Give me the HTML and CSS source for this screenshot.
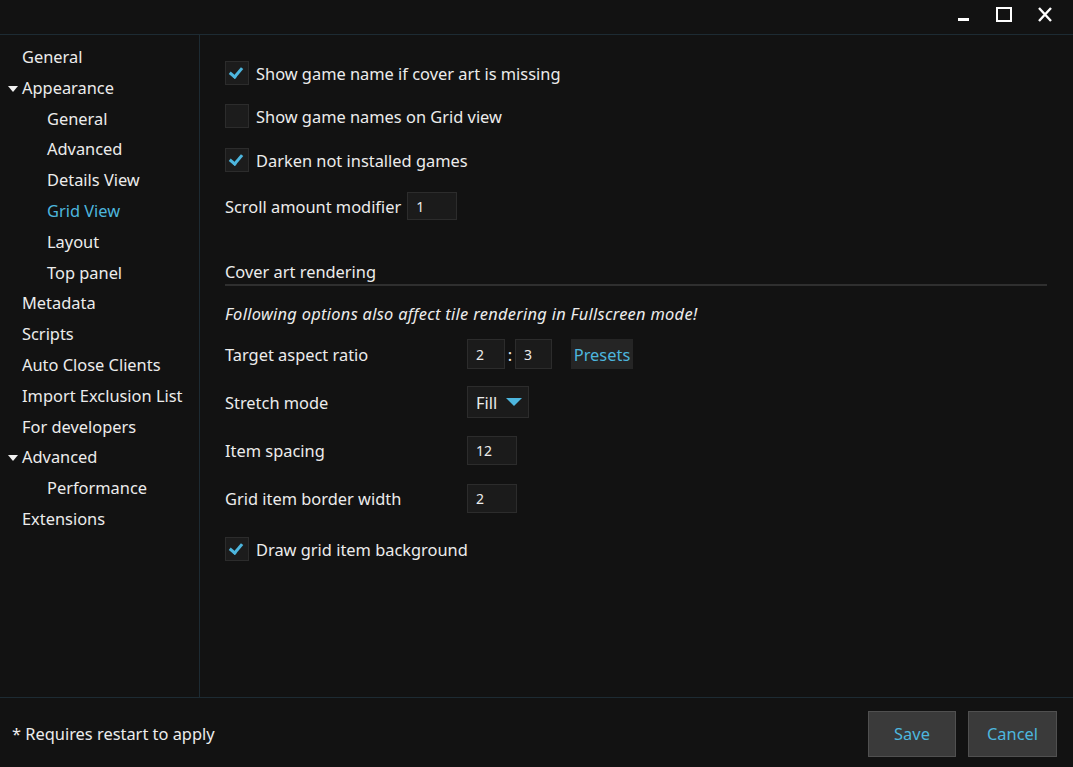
FILE: index.html
```html
<!DOCTYPE html>
<html>
<head>
<meta charset="utf-8">
<link rel="stylesheet" href="styles.css">
</head>
<body>
<div class="window">
  <div class="titlebar">
    <div class="win-btn">
      <svg width="14" height="14" viewBox="0 0 14 14"><rect x="1" y="10" width="11" height="3" fill="#fff"/></svg>
    </div>
    <div class="win-btn">
      <svg width="16" height="16" viewBox="0 0 16 16"><rect x="1" y="1" width="14" height="13" fill="none" stroke="#fff" stroke-width="2"/></svg>
    </div>
    <div class="win-btn">
      <svg width="16" height="16" viewBox="0 0 16 16"><path d="M2 1 L14 14 M14 1 L2 14" stroke="#fff" stroke-width="2.4" fill="none"/></svg>
    </div>
  </div>
  <div class="main">
    <nav class="sidebar">
      <div class="item l1">General</div>
      <div class="item l1"><span class="tri"></span>Appearance</div>
      <div class="item l2">General</div>
      <div class="item l2">Advanced</div>
      <div class="item l2">Details View</div>
      <div class="item l2 active">Grid View</div>
      <div class="item l2">Layout</div>
      <div class="item l2">Top panel</div>
      <div class="item l1">Metadata</div>
      <div class="item l1">Scripts</div>
      <div class="item l1">Auto Close Clients</div>
      <div class="item l1">Import Exclusion List</div>
      <div class="item l1">For developers</div>
      <div class="item l1"><span class="tri"></span>Advanced</div>
      <div class="item l2">Performance</div>
      <div class="item l1">Extensions</div>
    </nav>
    <section class="content">
      <label class="check r1"><span class="box on"></span>Show game name if cover art is missing</label>
      <label class="check r2"><span class="box"></span>Show game names on Grid view</label>
      <label class="check r3"><span class="box on"></span>Darken not installed games</label>
      <div class="inline r4"><span>Scroll amount modifier</span><span class="input w50">1</span></div>
      <div class="header">Cover art rendering</div>
      <div class="note">Following options also affect tile rendering in Fullscreen mode!</div>
      <div class="field f1">
        <span class="label">Target aspect ratio</span>
        <span class="input w38">2</span><span class="colon">:</span><span class="input w37">3</span>
        <span class="presets">Presets</span>
      </div>
      <div class="field f2">
        <span class="label">Stretch mode</span>
        <span class="combo">Fill<span class="arrow"></span></span>
      </div>
      <div class="field f3">
        <span class="label">Item spacing</span>
        <span class="input w50">12</span>
      </div>
      <div class="field f4">
        <span class="label">Grid item border width</span>
        <span class="input w50">2</span>
      </div>
      <label class="check r5"><span class="box on"></span>Draw grid item background</label>
    </section>
  </div>
  <div class="footer">
    <span class="hint">* Requires restart to apply</span>
    <div class="buttons">
      <span class="btn save">Save</span>
      <span class="btn cancel">Cancel</span>
    </div>
  </div>
</div>
</body>
</html>
```
FILE: styles.css
```css
html, body {
  margin: 0;
  padding: 0;
  background: #121212;
}
body {
  font-family: "Noto Sans", "Open Sans", sans-serif;
  font-size: 16.4px;
  color: #ececec;
}
.window {
  width: 1073px;
  height: 767px;
  display: flex;
  flex-direction: column;
  background: #121212;
}
.titlebar {
  height: 34px;
  border-bottom: 1px solid #1d2b33;
  display: flex;
  justify-content: flex-end;
  align-items: flex-start;
  padding-right: 8px;
}
.win-btn {
  width: 41px;
  height: 30px;
  display: flex;
  align-items: center;
  justify-content: center;
}
.win-btn:first-child { width: 38px; }
.main {
  flex: 1;
  display: flex;
  min-height: 0;
}
.sidebar {
  width: 200px;
  border-right: 1px solid #1d2b33;
  padding-top: 7px;
  box-sizing: border-box;
  flex: none;
}
.item {
  height: 30.8px;
  line-height: 30.8px;
  white-space: nowrap;
  position: relative;
}
.item.l1 { padding-left: 22px; }
.item.l2 { padding-left: 47px; }
.item.active { color: #4db6de; }
.tri {
  position: absolute;
  left: 8px;
  top: 13px;
  width: 0;
  height: 0;
  border-left: 5px solid transparent;
  border-right: 5px solid transparent;
  border-top: 6px solid #f0f0f0;
}
.content {
  flex: 1;
  padding: 26px 26px 0 25px;
  display: flex;
  flex-direction: column;
  align-items: flex-start;
}
.check {
  display: flex;
  align-items: center;
  height: 24px;
  gap: 7px;
}
.box {
  width: 22px;
  height: 22px;
  background: #1c1c1c;
  border: 1px solid #2c2c2c;
  position: relative;
  flex: none;
}
.box.on::after {
  content: "";
  position: absolute;
  left: 6px;
  top: 3px;
  width: 5px;
  height: 10px;
  border-right: 3px solid #4db6de;
  border-bottom: 3px solid #4db6de;
  transform: rotate(40deg);
}
.r2 { margin-top: 19px; }
.r3 { margin-top: 20px; }
.r5 { margin-top: 24px; }
.inline {
  display: flex;
  align-items: center;
  gap: 6px;
  margin-top: 20px;
}
.input {
  box-sizing: border-box;
  height: 29px;
  background: #1b1b1b;
  border: 1px solid #2c2c2c;
  font-size: 14px;
  display: inline-flex;
  align-items: center;
  padding-left: 8px;
}
.r4 .input { height: 28px; }
.w50 { width: 50px; }
.w38 { width: 38px; }
.w37 { width: 37px; }
.header {
  margin-top: 40px;
  align-self: stretch;
  line-height: 23px;
  padding-bottom: 1px;
  border-bottom: 2px solid #2f2f2f;
}
.note {
  margin-top: 16px;
  line-height: 23px;
  font-style: italic;
  letter-spacing: 0.3px;
}
.field {
  display: flex;
  align-items: center;
}
.label {
  width: 242px;
  flex: none;
}
.f1 { margin-top: 14px; }
.f1 .input { height: 30px; }
.f2 { margin-top: 17px; }
.f3 { margin-top: 18px; }
.f4 { margin-top: 19px; }
.colon {
  width: 10px;
  text-align: center;
}
.presets {
  margin-left: 19px;
  height: 30px;
  width: 62px;
  box-sizing: border-box;
  background: #252525;
  color: #4db6de;
  display: inline-flex;
  align-items: center;
  justify-content: center;
}
.combo {
  box-sizing: border-box;
  width: 62px;
  height: 32px;
  background: #1b1b1b;
  border: 1px solid #2c2c2c;
  display: inline-flex;
  align-items: center;
  padding-left: 8px;
  gap: 9px;
}
.arrow {
  width: 0;
  height: 0;
  border-left: 8px solid transparent;
  border-right: 8px solid transparent;
  border-top: 8px solid #4db6de;
}
.footer {
  height: 69px;
  border-top: 1px solid #1d2b33;
  display: flex;
  align-items: center;
  justify-content: space-between;
  padding: 0 16px 0 12px;
}
.hint { margin-top: 2px; }
.buttons {
  display: flex;
  gap: 12px;
  margin-top: 2px;
}
.btn {
  box-sizing: border-box;
  height: 46px;
  background: #3a3a3a;
  border: 1px solid #505050;
  color: #4db6de;
  display: inline-flex;
  align-items: center;
  justify-content: center;
}
.save { width: 88px; }
.cancel { width: 89px; }
```
